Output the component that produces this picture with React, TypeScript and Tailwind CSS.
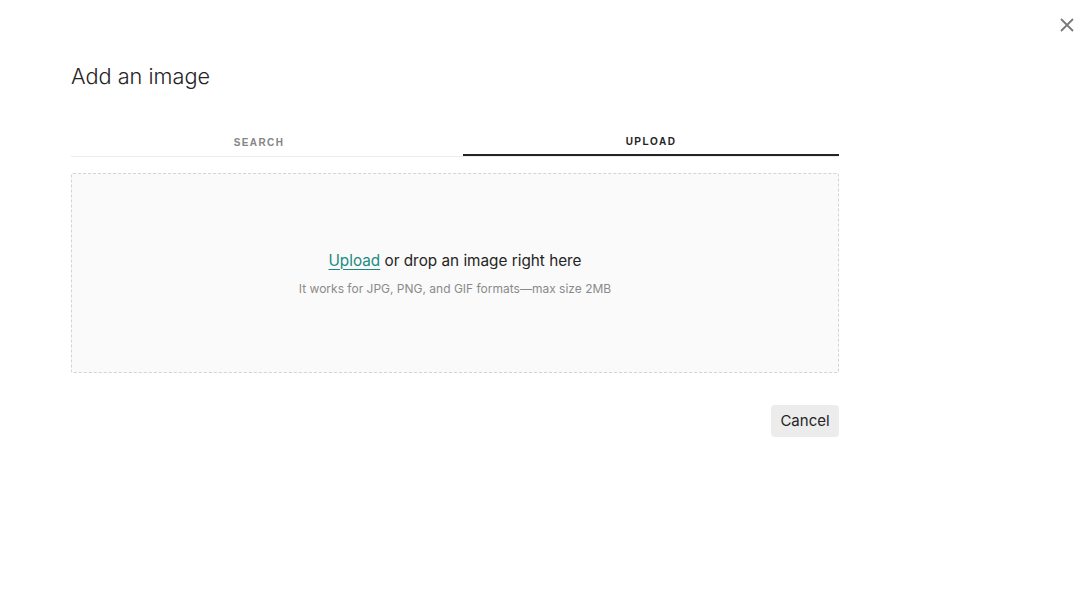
import React from 'react';

const App: React.FC = () => {
  return (
    <div className="relative w-full min-h-[607px] bg-white" style={{ fontFamily: 'Inter, "Noto Sans", sans-serif' }}>
      <button className="absolute right-[16px] top-[18px] w-[14px] h-[14px] text-[#7a7a7a]" aria-label="Close">
        <svg viewBox="0 0 14 14" width="14" height="14" fill="none" stroke="currentColor" strokeWidth="1.8">
          <path d="M1 1L13 13M13 1L1 13" />
        </svg>
      </button>

      <div className="w-[768px] ml-[71px] pt-[61px]">
        <h1 className="text-[21.7px] leading-[30px] font-light text-[#242424]">Add an image</h1>

        <div className="mt-[41px] flex gap-4 border-b border-[#ebebeb]">
          <button className="w-[376px] h-[24px] text-[10px] font-bold tracking-[1.4px] text-[#858585] pb-[4px]" style={{ fontFamily: '"Liberation Sans", Arial, sans-serif' }}>
            SEARCH
          </button>
          <button className="flex-1 h-[24px] text-[10px] font-bold tracking-[1.4px] text-[#242424] pb-[4px] border-b-2 border-[#242424] -mb-px" style={{ fontFamily: '"Liberation Sans", Arial, sans-serif' }}>
            UPLOAD
          </button>
        </div>

        <div className="mt-[16px] h-[200px] border border-dashed border-[#d4d4d4] bg-[#fafafa] rounded-[2px] flex flex-col items-center justify-center">
          <p className="text-[15.3px] leading-[22px] text-[#242424]">
            <a className="underline underline-offset-[3px] decoration-[1px] text-[#1c8a82]" href="#">Upload</a> or drop an image right here
          </p>
          <p className="mt-[9px] text-[12px] leading-[16px] text-[#8a8a8a]">It works for JPG, PNG, and GIF formats—max size 2MB</p>
        </div>

        <div className="mt-[32px] flex justify-end">
          <button className="w-[68px] h-[32px] rounded-[4px] bg-[#ececec] text-[15px] text-[#242424]">Cancel</button>
        </div>
      </div>
    </div>
  );
};

export default App;
